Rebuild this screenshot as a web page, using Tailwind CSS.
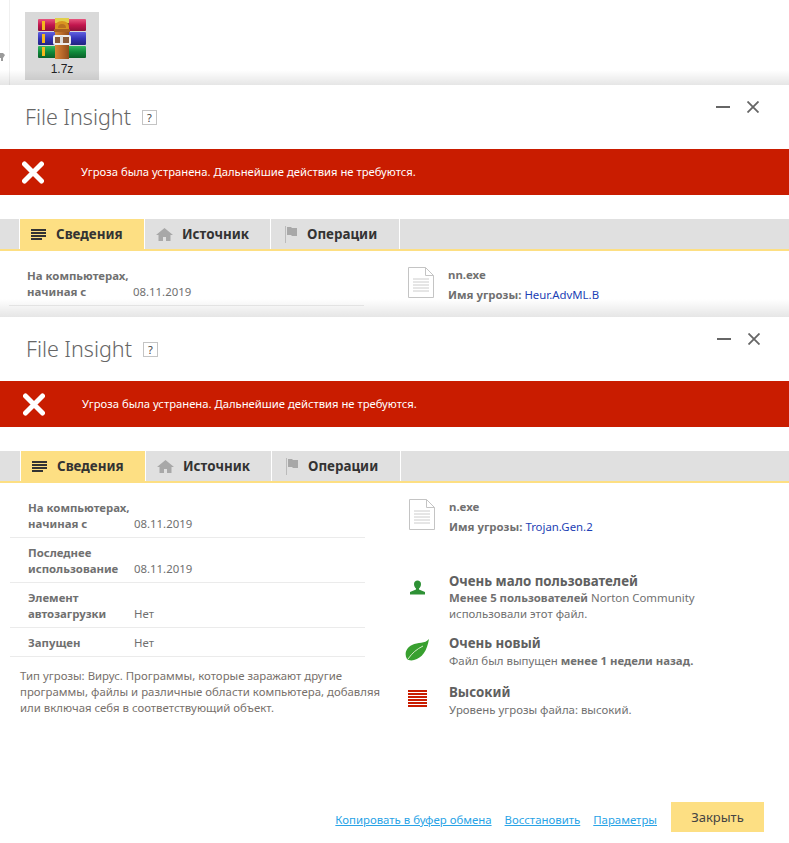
<!DOCTYPE html>
<html lang="en">
<head>
  <meta charset="UTF-8">
  <title>File Insight</title>
  <script src="https://cdn.jsdelivr.net/npm/@tailwindcss/browser@4"></script>
</head>
<body class="bg-white font-['Noto_Sans','Open_Sans',sans-serif] text-[11.4px] leading-4 text-[#707070] w-[789px] h-[843px] overflow-hidden">
  <!-- Desktop strip -->
  <div class="relative h-[85px]">
    <div class="absolute left-[9px] top-0 h-full w-px bg-[#f0f0f0]"></div>
    <svg class="absolute left-0 top-[52px]" width="5" height="10" viewBox="0 0 5 10"><path d="M0 1h3l2 2-2 3v3H1V6H0z" fill="#9a9a9a"/></svg>
    <div class="absolute left-[25px] top-[12px] w-[74px] h-[68px] bg-[#d9d9d9] flex flex-col items-center pt-[6px]">
      <svg width="50" height="42" viewBox="0 0 50 42">
        <defs>
          <linearGradient id="red" x1="0" y1="0" x2="0" y2="1"><stop offset="0" stop-color="#e8557f"/><stop offset="0.5" stop-color="#c2164e"/><stop offset="1" stop-color="#8e1038"/></linearGradient>
          <linearGradient id="blue" x1="0" y1="0" x2="0" y2="1"><stop offset="0" stop-color="#6060e0"/><stop offset="0.5" stop-color="#3434b8"/><stop offset="1" stop-color="#23237f"/></linearGradient>
          <linearGradient id="green" x1="0" y1="0" x2="0" y2="1"><stop offset="0" stop-color="#35b860"/><stop offset="0.5" stop-color="#0f8a3a"/><stop offset="1" stop-color="#0a5f28"/></linearGradient>
          <linearGradient id="strap" x1="0" y1="0" x2="1" y2="0"><stop offset="0" stop-color="#d98a38"/><stop offset="0.5" stop-color="#b9692a"/><stop offset="1" stop-color="#8f4d1c"/></linearGradient>
        </defs>
        <rect x="1" y="1" width="48" height="12" rx="1" fill="url(#red)"/>
        <rect x="1" y="14" width="48" height="13" rx="1" fill="url(#blue)"/>
        <rect x="1" y="28" width="48" height="12" rx="1" fill="url(#green)"/>
        <rect x="5" y="3" width="3" height="9" fill="#f5b81c"/><rect x="5" y="16" width="3" height="9" fill="#f5b81c"/><rect x="5" y="29" width="3" height="9" fill="#f5b81c"/>
        <rect x="18" y="0" width="14" height="41" fill="url(#strap)"/>
        <rect x="18" y="0" width="14" height="5" fill="#e2cf4a"/>
        <path d="M18 10q0-7 7-7t7 7v2H18z" fill="#d99420"/>
        <path d="M21 10q0-4 4-4t4 4z" fill="#b9701f"/>
        <rect x="17" y="11" width="16" height="3" fill="#a85f22"/>
        <rect x="17" y="18" width="16" height="8" rx="1" fill="#8a5a3a" stroke="#eee" stroke-width="2"/>
        <rect x="23" y="18" width="3" height="7" fill="#ddd"/>
      </svg>
      <span class="font-['Liberation_Sans',sans-serif] text-[12px] leading-[14px] text-[#222] mt-[2px]">1.7z</span>
    </div>
    <div class="absolute left-0 bottom-0 w-full h-[15px] bg-linear-to-b from-transparent to-black/10"></div>
  </div>

  <!-- First window, cut off by the second one -->
  <div class="relative -ml-px w-[790px] h-[232px] overflow-hidden bg-white">
    <div class="flex items-start justify-between h-[64px] pl-[26px] pr-[30px]">
      <div class="flex items-center pt-[16px]">
        <span class="font-light text-[21.500px] leading-[32px] text-[#666]">File Insight</span>
        <span class="ml-[11px] w-[15px] h-[15px] border border-[#c4c4c4] text-[11px] leading-[13px] text-center text-[#444]">?</span>
      </div>
      <div class="flex items-center gap-[17px] pt-[16px]">
        <div class="w-[14px] h-[2px] bg-[#666]"></div>
        <svg width="12" height="12" viewBox="0 0 12 12"><path d="M0.500 0.500l11 11M11.500 0.500l-11 11" stroke="#666" stroke-width="1.800"/></svg>
      </div>
    </div>
    <div class="flex items-center h-[46px] bg-[#c91c00] text-white">
      <svg class="ml-[23px]" width="22" height="23" viewBox="0 0 22 23"><path d="M2.500 3l17 17M19.500 3l-17 17" stroke="#fff" stroke-width="5" stroke-linecap="round"/></svg>
      <span class="ml-[37px] text-[11.250px]">Угроза была устранена. Дальнейшие действия не требуются.</span>
    </div>
    <div class="flex mt-[24px] h-[32px] border-b-2 border-[#fddf83] bg-[#e0e0e0] text-[13.400px] font-bold text-[#333]">
      <div class="w-[21px] border-r border-white"></div>
      <div class="flex items-center w-[125px] bg-[#fddf83] border-r border-white pl-[11px]">
        <svg width="15" height="11" viewBox="0 0 15 11"><path d="M0 0h15v2H0zM0 3h15v2H0zM0 6h15v2H0zM0 9h11v2H0z" fill="#333"/></svg>
        <span class="ml-[10px]">Сведения</span>
      </div>
      <div class="flex items-center w-[126px] border-r border-white pl-[11px]">
        <svg width="17" height="13" viewBox="0 0 17 13"><path d="M8.500 0L17 7h-2.500v6H10V9H7v4H2.500V7H0z" fill="#a8a8a8"/></svg>
        <span class="ml-[9px]">Источник</span>
      </div>
      <div class="flex items-center w-[129px] border-r border-white pl-[14px]">
        <svg width="12" height="17" viewBox="0 0 12 17"><path d="M0 0h1v17H0z" fill="#bbb"/><path d="M2 1h4l1 1h5v8H7L6 9H2z" fill="#a8a8a8"/></svg>
        <span class="ml-[10px]">Операции</span>
      </div>
    </div>
    <div class="flex pt-[15px]">
      <div class="w-[355px] ml-[10px]">
        <div class="flex items-end pl-[18px] pb-[5px] pt-[2px] border-b border-[#ebebeb]">
          <div class="w-[106px] font-bold whitespace-nowrap">На компьютерах,<br>начиная с</div>
          <div>08.11.2019</div>
        </div>
      </div>
      <div class="flex ml-[44px]">
        <svg class="mt-[1px]" width="26" height="31" viewBox="0 0 26 31"><path d="M0.500 0.500h17l8 8v22h-25zM17.500 0.500v8h8" fill="#fff" stroke="#c4c4c4"/><path d="M5 12h16M5 15h16M5 18h16M5 21h16M5 24h16" stroke="#ccc"/></svg>
        <div class="ml-[14px] pt-[1px] font-bold">
          <div>nn.exe</div>
          <div class="mt-[4px]">Имя угрозы: <span class="font-normal text-[#1d3fb5]">Heur.AdvML.B</span></div>
        </div>
      </div>
    </div>
    <div class="absolute left-0 bottom-0 w-full h-[18px] bg-linear-to-b from-transparent to-black/10"></div>
  </div>

  <!-- Second window -->
  <div class="h-[526px] flex flex-col bg-white">
    <div class="flex items-start justify-between h-[64px] pl-[26px] pr-[29px]">
      <div class="flex items-center pt-[16px]">
        <span class="font-light text-[21.500px] leading-[32px] text-[#666]">File Insight</span>
        <span class="ml-[11px] w-[15px] h-[15px] border border-[#c4c4c4] text-[11px] leading-[13px] text-center text-[#444]">?</span>
      </div>
      <div class="flex items-center gap-[17px] pt-[16px]">
        <div class="w-[14px] h-[2px] bg-[#666]"></div>
        <svg width="12" height="12" viewBox="0 0 12 12"><path d="M0.500 0.500l11 11M11.500 0.500l-11 11" stroke="#666" stroke-width="1.800"/></svg>
      </div>
    </div>
    <div class="flex items-center h-[46px] bg-[#c91c00] text-white">
      <svg class="ml-[23px]" width="22" height="23" viewBox="0 0 22 23"><path d="M2.500 3l17 17M19.500 3l-17 17" stroke="#fff" stroke-width="5" stroke-linecap="round"/></svg>
      <span class="ml-[37px] text-[11.250px]">Угроза была устранена. Дальнейшие действия не требуются.</span>
    </div>
    <div class="flex mt-[24px] h-[32px] border-b-2 border-[#fddf83] bg-[#e0e0e0] text-[13.400px] font-bold text-[#333]">
      <div class="w-[21px] border-r border-white"></div>
      <div class="flex items-center w-[125px] bg-[#fddf83] border-r border-white pl-[11px]">
        <svg width="15" height="11" viewBox="0 0 15 11"><path d="M0 0h15v2H0zM0 3h15v2H0zM0 6h15v2H0zM0 9h11v2H0z" fill="#333"/></svg>
        <span class="ml-[10px]">Сведения</span>
      </div>
      <div class="flex items-center w-[126px] border-r border-white pl-[11px]">
        <svg width="17" height="13" viewBox="0 0 17 13"><path d="M8.500 0L17 7h-2.500v6H10V9H7v4H2.500V7H0z" fill="#a8a8a8"/></svg>
        <span class="ml-[9px]">Источник</span>
      </div>
      <div class="flex items-center w-[129px] border-r border-white pl-[14px]">
        <svg width="12" height="17" viewBox="0 0 12 17"><path d="M0 0h1v17H0z" fill="#bbb"/><path d="M2 1h4l1 1h5v8H7L6 9H2z" fill="#a8a8a8"/></svg>
        <span class="ml-[10px]">Операции</span>
      </div>
    </div>
    <div class="flex pt-[15px]">
      <div class="w-[355px] ml-[10px]">
        <div class="flex items-end pl-[18px] pb-[5px] pt-[2px] border-b border-[#ebebeb]">
          <div class="w-[106px] font-bold whitespace-nowrap">На компьютерах,<br>начиная с</div>
          <div>08.11.2019</div>
        </div>
        <div class="flex items-end pl-[18px] pt-[7px] pb-[5px] border-b border-[#ebebeb]">
          <div class="w-[106px] font-bold">Последнее<br>использование</div>
          <div>08.11.2019</div>
        </div>
        <div class="flex items-end pl-[18px] pt-[7px] pb-[5px] border-b border-[#ebebeb]">
          <div class="w-[106px] font-bold">Элемент<br>автозагрузки</div>
          <div>Нет</div>
        </div>
        <div class="flex items-end pl-[18px] pt-[7px] pb-[5px] border-b border-[#ebebeb]">
          <div class="w-[106px] font-bold">Запущен</div>
          <div>Нет</div>
        </div>
        <p class="mt-[11px] ml-[10px] whitespace-nowrap text-[#77706b]">Тип угрозы: Вирус. Программы, которые заражают другие<br>программы, файлы и различные области компьютера, добавляя<br>или включая себя в соответствующий объект.</p>
      </div>
      <div class="ml-[44px]">
        <div class="flex">
          <svg class="mt-[1px]" width="26" height="31" viewBox="0 0 26 31"><path d="M0.500 0.500h17l8 8v22h-25zM17.500 0.500v8h8" fill="#fff" stroke="#c4c4c4"/><path d="M5 12h16M5 15h16M5 18h16M5 21h16M5 24h16" stroke="#ccc"/></svg>
          <div class="ml-[14px] pt-[1px] font-bold">
            <div>n.exe</div>
            <div class="mt-[4px]">Имя угрозы: <span class="font-normal text-[#1d3fb5]">Trojan.Gen.2</span></div>
          </div>
        </div>
        <div class="flex mt-[38px]">
          <div class="w-[40px] pt-[7px] pl-[1px]">
            <svg width="15" height="15" viewBox="0 0 15 15"><path d="M7.500 0.500c2 0 3.500 1.500 3.500 3.500 0 2-1 3.500-2 4.500v1l6 2.500v2.500H0v-2.500l6-2.500v-1C5 7.500 4 6 4 4c0-2 1.500-3.500 3.500-3.500z" fill="#2e9135"/></svg>
          </div>
          <div class="w-[290px]">
            <div class="font-bold text-[13.300px] text-[#606060]">Очень мало пользователей</div>
            <div class="mt-[1px]"><b>Менее 5 пользователей</b> Norton Community<br>использовали этот файл.</div>
          </div>
        </div>
        <div class="flex mt-[13px]">
          <div class="w-[40px] pt-[4px] -ml-[4px] mr-[4px]">
            <svg width="24" height="22" viewBox="0 0 24 22"><path d="M24 0C20 5 13 3 7 6 1 9-1 15 2 20c1 1 4 2 7 1 8-2 13-9 15-21z" fill="#38a02f"/><path d="M3 20C7 14 12 10 18 7" stroke="#d5ecc8" stroke-width="1" fill="none"/></svg>
          </div>
          <div class="w-[290px]">
            <div class="font-bold text-[13.300px] text-[#606060]">Очень новый</div>
            <div class="mt-[2px]">Файл был выпущен <b>менее 1 недели назад.</b></div>
          </div>
        </div>
        <div class="flex mt-[15px]">
          <div class="w-[40px] pt-[6px] -ml-[1px] mr-[1px]">
            <svg width="19" height="17" viewBox="0 0 19 17"><path d="M0 0h19v2H0zM0 3h19v2H0zM0 6h19v2H0zM0 9h19v2H0zM0 12h19v2H0zM0 15h19v2H0z" fill="#c91c00"/></svg>
          </div>
          <div class="w-[290px]">
            <div class="font-bold text-[13.300px] text-[#606060]">Высокий</div>
            <div class="mt-[2px]">Уровень угрозы файла: высокий.</div>
          </div>
        </div>
      </div>
    </div>
    <div class="flex items-center justify-end mt-auto mb-[11px] mr-[25px] gap-[13px]">
      <a class="mt-[6px] text-[#29a3e6] underline" href="#">Копировать в буфер обмена</a>
      <a class="mt-[6px] text-[#29a3e6] underline" href="#">Восстановить</a>
      <a class="mt-[6px] mr-px text-[#29a3e6] underline" href="#">Параметры</a>
      <button class="w-[93px] h-[30px] bg-[#fddf83] text-[13px] text-[#444]">Закрыть</button>
    </div>
  </div>
</body>
</html>
